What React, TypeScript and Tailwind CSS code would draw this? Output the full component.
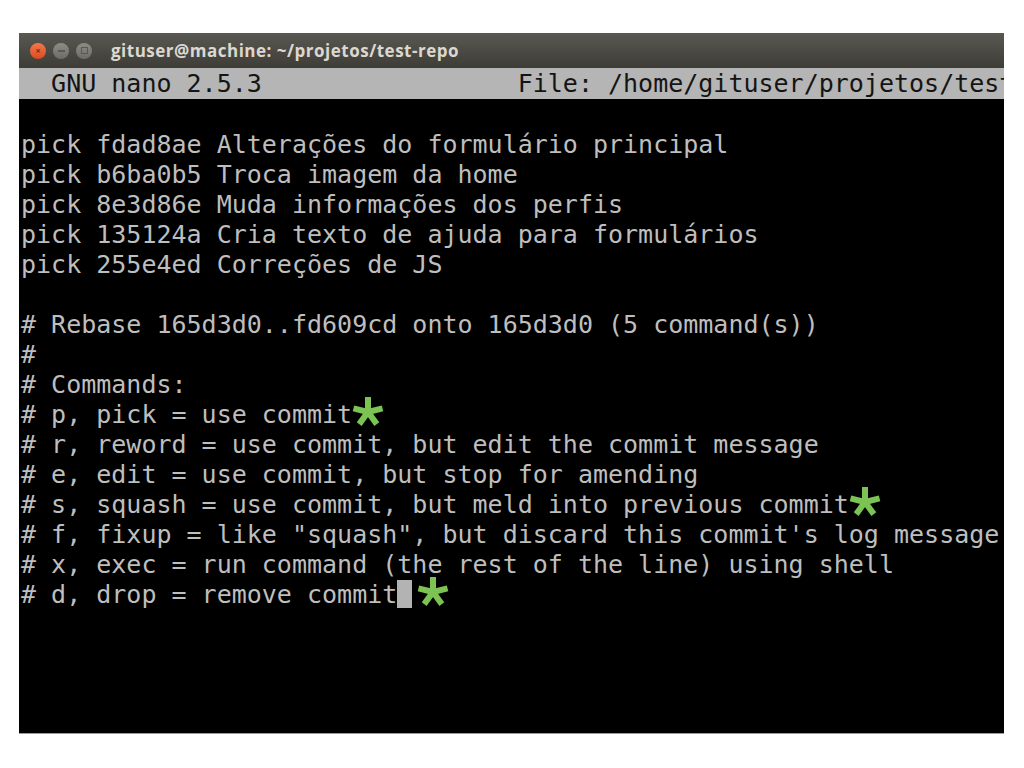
import React from "react";

const Star = ({ ml = 0 }: { ml?: number }) => (
  <svg
    width="32"
    height="32"
    viewBox="-16 -16 32 32"
    className="inline-block align-middle relative -top-[5px]"
    style={{ marginLeft: ml }}
  >
    {[-90, -14, 194, 54, 126].map((a) => {
      const r = (a * Math.PI) / 180;
      return (
        <line
          key={a}
          x1={0}
          y1={1}
          x2={Math.cos(r) * 15}
          y2={1 + Math.sin(r) * 15}
          stroke="#7cc353"
          strokeWidth={6}
          strokeLinecap="butt"
        />
      );
    })}
  </svg>
);

const lines: React.ReactNode[] = [
  "",
  "pick fdad8ae Alterações do formulário principal",
  "pick b6ba0b5 Troca imagem da home",
  "pick 8e3d86e Muda informações dos perfis",
  "pick 135124a Cria texto de ajuda para formulários",
  "pick 255e4ed Correções de JS",
  "",
  "# Rebase 165d3d0..fd609cd onto 165d3d0 (5 command(s))",
  "#",
  "# Commands:",
  <>
    # p, pick = use commit
    <Star />
  </>,
  "# r, reword = use commit, but edit the commit message",
  "# e, edit = use commit, but stop for amending",
  <>
    # s, squash = use commit, but meld into previous commit
    <Star />
  </>,
  "# f, fixup = like \"squash\", but discard this commit's log message",
  "# x, exec = run command (the rest of the line) using shell",
  <>
    # d, drop = remove commit
    <span className="inline-block w-[15px] h-[28px] bg-[#b3b3b3] align-middle relative -top-[2px]"></span>
    <Star ml={5} />
  </>,
];

export default function App() {
  return (
    <div className="w-[1024px] h-[768px] bg-white pt-[33px] pl-[19px]">
      <div className="w-[985px] h-[701px] bg-black flex flex-col overflow-hidden border-b border-[#9a9a9a]">
        <div className="h-[35px] shrink-0 bg-gradient-to-b from-[#5a5852] to-[#3d3c37] flex items-center pl-[11px]">
          <div className="w-[16px] h-[16px] rounded-full bg-gradient-to-b from-[#f2774a] to-[#d94b1f] flex items-center justify-center text-[9px] leading-none text-[#7a2a10] font-bold">
            ×
          </div>
          <div className="w-[16px] h-[16px] rounded-full bg-gradient-to-b from-[#8e8c86] to-[#6e6c66] ml-[7px] flex items-center justify-center">
            <div className="w-[7px] h-[2px] bg-[#5b5954]"></div>
          </div>
          <div className="w-[16px] h-[16px] rounded-full bg-gradient-to-b from-[#8e8c86] to-[#6e6c66] ml-[7px] flex items-center justify-center">
            <div className="w-[7px] h-[7px] border border-[#5b5954]"></div>
          </div>
          <div
            className="ml-[19px] text-[17px] font-bold text-[#dcd8cf] tracking-[0.5px]"
            style={{ fontFamily: '"Open Sans", "Noto Sans", sans-serif' }}
          >
            gituser@machine: ~/projetos/test-repo
          </div>
        </div>
        <div
          className="h-[31px] shrink-0 bg-[#b5b5b5] text-[#141414] text-[25px] leading-[31px] whitespace-pre overflow-hidden pl-[2px]"
          style={{ fontFamily: '"DejaVu Sans Mono", monospace' }}
        >
          {"  GNU nano 2.5.3                 File: /home/gituser/projetos/test-repo/.git/rebase-merge/git-rebase-todo"}
        </div>
        <div
          className="flex flex-col text-[25px] leading-[30px] text-[#bebebe] whitespace-pre pl-[2px] pt-[1px]"
          style={{ fontFamily: '"DejaVu Sans Mono", monospace' }}
        >
          {lines.map((l, i) => (
            <div key={i} className="h-[30px]">
              {l}
            </div>
          ))}
        </div>
      </div>
    </div>
  );
}
